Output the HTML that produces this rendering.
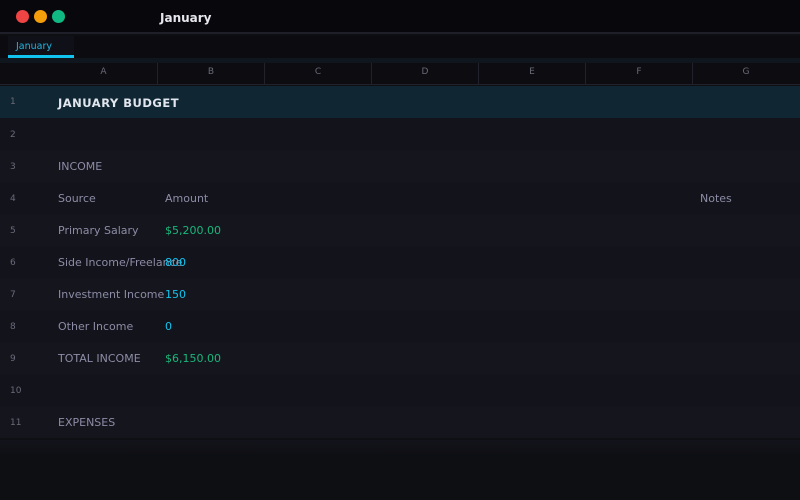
<!DOCTYPE html><html><head><style>
*{margin:0;padding:0;box-sizing:border-box}
body{width:800px;height:500px;background:#0e0f13;font-family:"DejaVu Sans",sans-serif;overflow:hidden;position:relative}
.top{position:absolute;left:0;top:0;width:800px;height:34px;background:#08080c;border-bottom:2px solid #1f1f29}
.dot{position:absolute;top:10px;width:13px;height:13px;border-radius:50%}
.title{position:absolute;left:160px;top:11px;color:#e6e6ee;font-size:12px;font-weight:bold}
.tabs{position:absolute;top:36px;left:0;width:800px;height:22px;background:#0b0b10}
.tab{position:absolute;left:8px;top:0;width:66px;height:22px;background:#101018;color:#22b7e0;font-size:9.5px;padding:5px 0 0 8px;border-bottom:3px solid #10c4ef}
.strip{position:absolute;top:58px;left:0;width:800px;height:5px;background:#10161d}
.colh{position:absolute;top:63px;left:0;width:800px;height:22px;background:#0c0c11;border-bottom:1px solid #22222c}
.colh div{position:absolute;top:0;height:22px;width:107px;border-left:1px solid #22222c;color:#6a6a78;font-size:9px;text-align:center;line-height:18px}
.row{position:absolute;left:0;width:800px;height:32px;background:#13131b}
.row.b{background:#15151d}
.row .n{position:absolute;left:10px;top:12px;color:#6a6a7a;font-size:9px}
.row span{position:absolute;top:10px;font-size:11px;color:#8c8ca6}
.g{color:#19b77a!important}.c{color:#10c4ef!important}
.fade{position:absolute;left:0;top:440px;width:800px;height:60px;background:linear-gradient(#13131b,#0e0f13 16px)}
</style></head><body>
<div class="top">
<div class="dot" style="left:16px;background:#ef4444"></div>
<div class="dot" style="left:34px;background:#f59e0b"></div>
<div class="dot" style="left:52px;background:#10b981"></div>
<div class="title">January</div></div>
<div class="tabs"><div class="tab">January</div></div>
<div class="strip"></div>
<div class="colh">
<div style="left:50px;border-left:none">A</div><div style="left:157px">B</div><div style="left:264px">C</div><div style="left:371px">D</div><div style="left:478px">E</div><div style="left:585px">F</div><div style="left:692px">G</div></div>
<div class="row" style="top:86px;background:#102733"><div class="n" style="top:11px">1</div><span style="left:58px;top:10px;color:#e2e6ee;font-weight:bold;font-size:11.5px;letter-spacing:.5px">JANUARY BUDGET</span></div>
<div class="row" style="top:118px"><div class="n">2</div></div>
<div class="row b" style="top:150px"><div class="n">3</div><span style="left:58px">INCOME</span></div>
<div class="row" style="top:182px"><div class="n">4</div><span style="left:58px">Source</span><span style="left:165px">Amount</span><span style="left:700px">Notes</span></div>
<div class="row b" style="top:214px"><div class="n">5</div><span style="left:58px">Primary Salary</span><span class="g" style="left:165px">$5,200.00</span></div>
<div class="row" style="top:246px"><div class="n">6</div><span style="left:58px">Side Income/Freelance</span><span class="c" style="left:165px">800</span></div>
<div class="row b" style="top:278px"><div class="n">7</div><span style="left:58px">Investment Income</span><span class="c" style="left:165px">150</span></div>
<div class="row" style="top:310px"><div class="n">8</div><span style="left:58px">Other Income</span><span class="c" style="left:165px">0</span></div>
<div class="row b" style="top:342px"><div class="n">9</div><span style="left:58px">TOTAL INCOME</span><span class="g" style="left:165px">$6,150.00</span></div>
<div class="row" style="top:374px"><div class="n">10</div></div>
<div class="row b" style="top:406px"><div class="n">11</div><span style="left:58px">EXPENSES</span></div>
<div class="fade"></div>
</body></html>
